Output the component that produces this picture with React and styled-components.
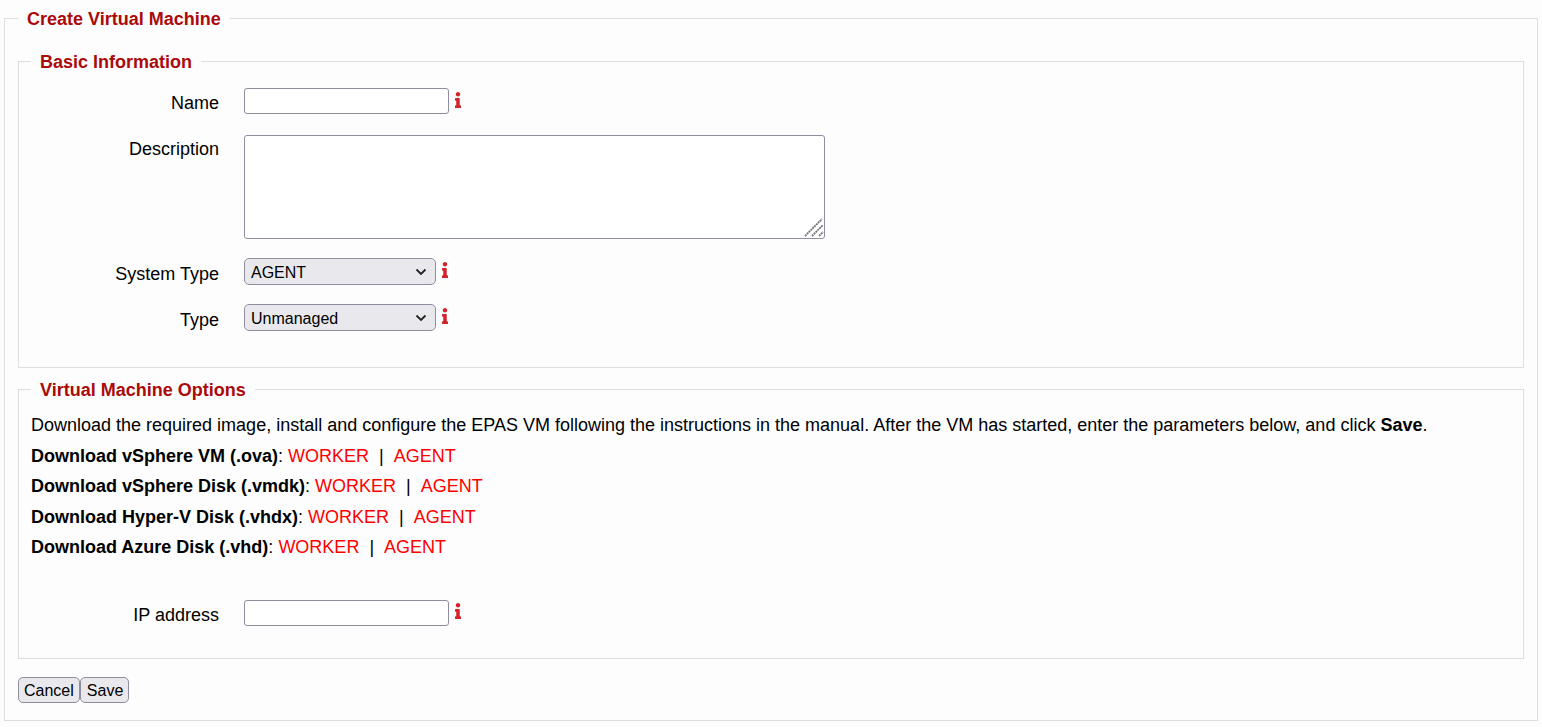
import React from 'react';
import styled, { createGlobalStyle } from 'styled-components';
import { FaInfo } from 'react-icons/fa';

const GlobalStyle = createGlobalStyle`
  html, body {
    margin: 0;
    padding: 0;
    background: #fdfdfd;
  }
  body {
    font-family: "Liberation Sans", Arial, sans-serif;
    font-size: 18px;
    color: #000;
  }
`;

const Page = styled.div`
  padding: 7px 4px 6px 4px;
  box-sizing: border-box;
`;

const Fieldset = styled.fieldset`
  margin: ${(p) => p.$margin || '0'};
  padding: ${(p) => p.$padding || '0'};
  border: 1px solid #dedede;
  min-width: 0;
`;

const Legend = styled.legend`
  padding: 2px 9px 0;
  font-size: 18px;
  font-weight: bold;
  line-height: 20px;
  color: #aa0a0a;
`;

const Row = styled.div`
  display: flex;
  align-items: flex-start;
  margin-top: ${(p) => p.$top || '0'};
`;

const Label = styled.label`
  flex: none;
  width: 188px;
  margin-right: 25px;
  padding-top: ${(p) => p.$pad || '5px'};
  text-align: right;
  line-height: 20px;
`;

const TextInput = styled.input`
  width: 205px;
  height: 26px;
  box-sizing: border-box;
  background: #fff;
  border: 1px solid #8f8d9f;
  border-radius: 3px;
`;

const TextAreaWrap = styled.div`
  position: relative;
  width: 581px;
  height: 104px;
`;

const TextArea = styled.textarea`
  display: block;
  width: 100%;
  height: 100%;
  box-sizing: border-box;
  background: #fff;
  border: 1px solid #8f8d9f;
  border-radius: 3px;
  resize: none;
`;

const ResizeGrip = styled.svg`
  position: absolute;
  right: 1px;
  bottom: 2px;
  width: 20px;
  height: 20px;
  pointer-events: none;
`;

const chevron =
  "data:image/svg+xml,%3Csvg xmlns='http://www.w3.org/2000/svg' width='12' height='8' viewBox='0 0 12 8'%3E%3Cpath d='M1.5 1.5 6 6l4.5-4.5' fill='none' stroke='%23222' stroke-width='1.8'/%3E%3C/svg%3E";

const Select = styled.select`
  appearance: none;
  width: 192px;
  height: 27px;
  box-sizing: border-box;
  padding: 2px 0 0 6px;
  background: #e9e9ed url("${chevron}") no-repeat right 8px center;
  border: 1px solid #8f8d9f;
  border-radius: 5px;
  font-family: "Liberation Sans", Arial, sans-serif;
  font-size: 16px;
  color: #000;
`;

const Required = styled(FaInfo)`
  flex: none;
  width: 6px;
  height: 16px;
  margin: 3.5px 0 0 6px;
  color: #d2232a;
`;

const Intro = styled.p`
  margin: 0;
  line-height: 30.5px;
`;

const DownloadLine = styled.div`
  line-height: 30.5px;
`;

const LinkText = styled.a`
  color: #f00;
  text-decoration: none;
  cursor: pointer;
`;

const Sep = styled.span`
  margin: 0 10px;
`;

const Actions = styled.div`
  display: flex;
  margin-top: 18px;
`;

const Button = styled.button`
  height: 26px;
  padding: 3px 5px 0;
  background: #e9e9ed;
  border: 1px solid #8f8d9f;
  border-radius: 5px;
  font-family: "Liberation Sans", Arial, sans-serif;
  font-size: 16px;
  color: #000;

  & + & {
    padding-left: 6px;
  }
`;

const downloads = [
  'Download vSphere VM (.ova)',
  'Download vSphere Disk (.vmdk)',
  'Download Hyper-V Disk (.vhdx)',
  'Download Azure Disk (.vhd)',
];

const App = () => (
  <Page>
    <GlobalStyle />
    <Fieldset $padding="21px 13px 17px 13px">
      <Legend>Create Virtual Machine</Legend>
      <Fieldset $padding="16px 12px 36px 12px">
        <Legend>Basic Information</Legend>
        <Row>
          <Label>Name</Label>
          <TextInput type="text" />
          <Required />
        </Row>
        <Row $top="21px">
          <Label $pad="4px">Description</Label>
          <TextAreaWrap>
            <TextArea />
            <ResizeGrip viewBox="0 0 20 20">
              <path d="M1 19 18 2M8 19 19 8M15 19l4-4" stroke="#77757f" strokeWidth="1.8" strokeDasharray="2 0.6" fill="none" />
            </ResizeGrip>
          </TextAreaWrap>
        </Row>
        <Row $top="19px">
          <Label $pad="6px">System Type</Label>
          <Select defaultValue="AGENT">
            <option>AGENT</option>
            <option>WORKER</option>
          </Select>
          <Required />
        </Row>
        <Row $top="19px">
          <Label $pad="6px">Type</Label>
          <Select defaultValue="Unmanaged">
            <option>Unmanaged</option>
            <option>Managed</option>
          </Select>
          <Required />
        </Row>
      </Fieldset>
      <Fieldset $margin="10px 0 0 0" $padding="10px 12px 32px 12px">
        <Legend>Virtual Machine Options</Legend>
        <Intro>
          Download the required image, install and configure the EPAS VM following the instructions in the manual. After the VM has started, enter the parameters below, and click <b>Save</b>.
        </Intro>
        {downloads.map((name) => (
          <DownloadLine key={name}>
            <b>{name}</b>: <LinkText>WORKER</LinkText>
            <Sep>|</Sep>
            <LinkText>AGENT</LinkText>
          </DownloadLine>
        ))}
        <Row $top="37px">
          <Label>IP address</Label>
          <TextInput type="text" />
          <Required />
        </Row>
      </Fieldset>
      <Actions>
        <Button>Cancel</Button>
        <Button>Save</Button>
      </Actions>
    </Fieldset>
  </Page>
);

export default App;
